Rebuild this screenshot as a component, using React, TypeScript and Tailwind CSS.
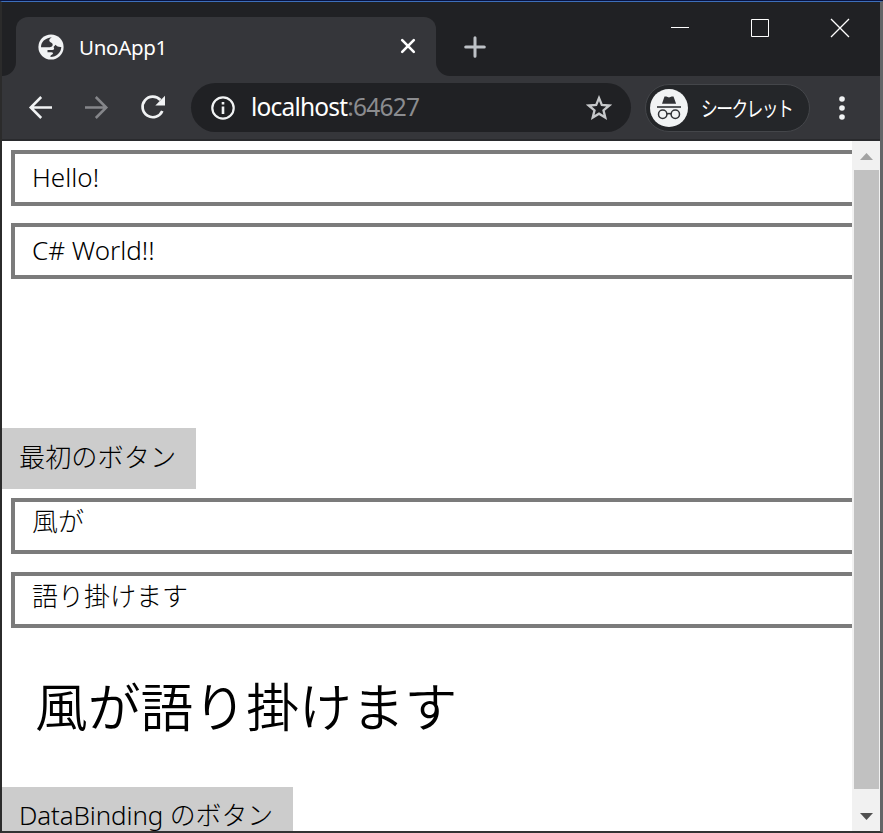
import type { ReactNode } from "react";

const TextBox = ({ children, className = "" }: { children: ReactNode; className?: string }) => (
  <div className={`ml-[9px] h-14 shrink-0 border-4 border-r-0 border-[#7b7b7b] bg-white pl-[17px] text-[26px] font-light whitespace-nowrap ${className}`}>
    {children}
  </div>
);

const GlobeIcon = () => (
  <svg width="26" height="26" viewBox="0 0 26 26">
    <circle cx="13" cy="13" r="12.6" fill="#f1f3f4" />
    <path d="M3 13.200C3 8 6.800 4 13.800 3.200c-1.200 1-2.800 2-2.500 3.600.3 1.700 3.400 1.800 3.400 3.800 0 2.500-2.200 2.700-4.700 2.700z" fill="#35363a" />
    <path d="M9.500 16h4.800c2-.1 2.300-1.500 1.200-3l2.100-2.200c1.200 1.700 3.400 2.500 5.700 2.200-.3 5.500-4.600 10-10.800 10-.3-1.400.3-2.100 1.700-2.600 1.400-.6 1-2.100-1-2.100H9.500z" fill="#35363a" />
  </svg>
);

const IncognitoIcon = () => (
  <svg className="shrink-0" width="38" height="38" viewBox="0 0 38 38">
    <circle cx="19" cy="19" r="19" fill="#f1f3f4" />
    <path d="M14.500 7.500h1.800l2.700.9 2.700-.9h1.800l2.600 7.300H12z" fill="#303236" />
    <path d="M7 18h24" stroke="#303236" strokeWidth="1.6" />
    <g fill="none" stroke="#303236" strokeWidth="1.500">
      <circle cx="12.700" cy="25.300" r="4.200" />
      <circle cx="25.300" cy="25.300" r="4.200" />
      <path d="M17 25q2-1.200 4 0" />
    </g>
  </svg>
);

const WindowControls = () => (
  <svg className="mt-4 mr-[30px]" width="180" height="20" viewBox="0 0 180 20" fill="none" stroke="#fff" strokeWidth="1">
    <path d="M1 9.500h18" />
    <path d="M81.500 1.500h17v17h-17z" />
    <path d="M161 1l18 18M179 1l-18 18" strokeWidth="1.300" />
  </svg>
);

const TitleBar = () => (
  <div className="flex h-[74px] shrink-0 bg-[#202124]">
    <div className="flex w-[14px] items-end bg-[#35363a]">
      <div className="h-full w-full rounded-br-[14px] bg-[#202124]" />
    </div>
    <div className="mt-[15px] flex w-[420px] items-start rounded-t-[12px] bg-[#35363a] pt-[17px] pl-[22px]">
      <GlobeIcon />
      <span className="-mt-px ml-[15px] flex-1 text-[20.500px] leading-[28px] tracking-[-0.3px] text-white">UnoApp1</span>
      <svg className="mt-1 mr-5" width="16" height="16" viewBox="0 0 16 16">
        <path d="M2.200 2.200l11.600 11.600M13.800 2.200L2.200 13.800" stroke="#fff" strokeWidth="2.600" strokeLinecap="round" />
      </svg>
    </div>
    <div className="flex-1 bg-[linear-gradient(to_right,#35363a_20px,#202124_20px)]">
      <div className="flex h-full justify-between rounded-bl-[14px] bg-[#202124]">
        <svg className="mt-[33.500px] ml-[27.500px]" width="22" height="22" viewBox="0 0 22 22">
          <path d="M11 1.700v18.600M1.700 11h18.600" stroke="#bdc1c6" strokeWidth="3" strokeLinecap="round" />
        </svg>
        <WindowControls />
      </div>
    </div>
  </div>
);

const Toolbar = () => (
  <div className="flex h-[65px] shrink-0 items-start border-b-2 border-[#292a2d] bg-[#35363a] pt-[7px]">
    <svg className="mt-3 ml-[26px]" width="25" height="25" viewBox="0 0 25 25" fill="none" stroke="#f1f3f4" strokeWidth="2.500">
      <path d="M24 12.500H3M13.200 2L2.700 12.500 13.200 23" />
    </svg>
    <svg className="mt-3 ml-[31px]" width="25" height="25" viewBox="0 0 25 25" fill="none" stroke="#85868a" strokeWidth="2.500">
      <path d="M1 12.500h21M11.800 2l10.500 10.500L11.800 23" />
    </svg>
    <svg className="mt-3 ml-[31px]" width="28" height="25" viewBox="0 0 28 25">
      <path d="M20.500 5A10.300 10.300 0 1 0 22.300 16" fill="none" stroke="#f1f3f4" strokeWidth="2.700" />
      <path d="M25 .8v9.700h-9.700z" fill="#f1f3f4" />
    </svg>
    <div className="ml-[23px] flex h-[49px] w-[440px] items-center rounded-full bg-[#202124] pl-5">
      <svg width="24" height="24" viewBox="0 0 24 24">
        <circle cx="12" cy="12" r="10.700" fill="none" stroke="#f1f3f4" strokeWidth="2.200" />
        <path d="M12 10.500v7.500M12 6v2.600" stroke="#f1f3f4" strokeWidth="2.600" />
      </svg>
      <span className="ml-4 flex-1 pb-px text-[24.500px] leading-8 tracking-[-0.8px] text-white">
        localhost<span className="text-[#8b8c8f]">:64627</span>
      </span>
      <svg className="mr-[19px]" width="26" height="26" viewBox="0 0 26 26">
        <path d="M13 3l2.800 6.900 7.400.6-5.700 4.800 1.800 7.300L13 18.700l-6.300 3.900 1.800-7.300-5.700-4.800 7.400-.6z" fill="none" stroke="#c6c8ca" strokeWidth="2.300" />
      </svg>
    </div>
    <div className="ml-[14px] mt-px flex h-12 w-[165px] items-center rounded-full border border-[#44464a] bg-[#242629] pl-1">
      <IncognitoIcon />
      <span className="ml-[13px] origin-left scale-x-[0.8] text-[21px] leading-7 tracking-[-2px] whitespace-nowrap text-white">シークレット</span>
    </div>
    <svg className="mt-[13px] ml-[29px]" width="6" height="24" viewBox="0 0 6 24" fill="#f1f3f4">
      <circle cx="3" cy="3" r="2.800" />
      <circle cx="3" cy="12" r="2.800" />
      <circle cx="3" cy="21" r="2.800" />
    </svg>
  </div>
);

const ScrollBar = () => (
  <div className="flex w-7 shrink-0 flex-col items-center bg-[#f1f1f1]">
    <svg className="mt-3 shrink-0" width="13" height="7" viewBox="0 0 13 7">
      <path d="M0 7L6.500 0 13 7z" fill="#a3a3a3" />
    </svg>
    <div className="mt-[10px] h-[619px] w-[25px] shrink-0 bg-[#c1c1c1]" />
    <svg className="mt-6 shrink-0" width="13" height="7" viewBox="0 0 13 7">
      <path d="M0 0h13L6.500 7z" fill="#505050" />
    </svg>
  </div>
);

const App = () => (
  <div className="flex h-[833px] w-[883px] flex-col overflow-hidden border-t border-t-[#071344] bg-white font-['Noto_Sans','Noto_Sans_CJK_JP',sans-serif] text-black">
    <div className="flex min-h-0 flex-1 flex-col border-t border-r-[3px] border-b-2 border-l-2 border-t-[#3d6fba] border-r-[#636466] border-b-[#333] border-l-[#2b2b2b]">
      <TitleBar />
      <Toolbar />
      <div className="flex min-h-0 flex-1">
        <main className="flex min-w-0 flex-1 flex-col items-stretch overflow-hidden pt-[9px]">
          <TextBox className="leading-[47px]">Hello!</TextBox>
          <TextBox className="mt-[17px] leading-[47px]">C# World!!</TextBox>
          <button className="mt-[149px] h-[61px] w-[194px] shrink-0 bg-[#ccc] pb-[3px] pl-[17px] text-left text-[26.200px] leading-[57px] font-light whitespace-nowrap">最初のボタン</button>
          <TextBox className="mt-[9px] leading-[38px]">風が</TextBox>
          <TextBox className="mt-[18px] leading-[40px]">語り掛けます</TextBox>
          <p className="mt-[40px] ml-[33px] h-[78px] shrink-0 text-[52.800px] leading-[78px] font-[350] whitespace-nowrap">風が語り掛けます</p>
          <button className="mt-[41px] flex h-[44px] w-[291px] shrink-0 items-start bg-[#ccc] pt-[14px] pl-[17px] text-[25.900px] leading-[28px] font-light tracking-[-0.1px] whitespace-nowrap">DataBinding のボタン</button>
        </main>
        <ScrollBar />
      </div>
    </div>
  </div>
);

export default App;
